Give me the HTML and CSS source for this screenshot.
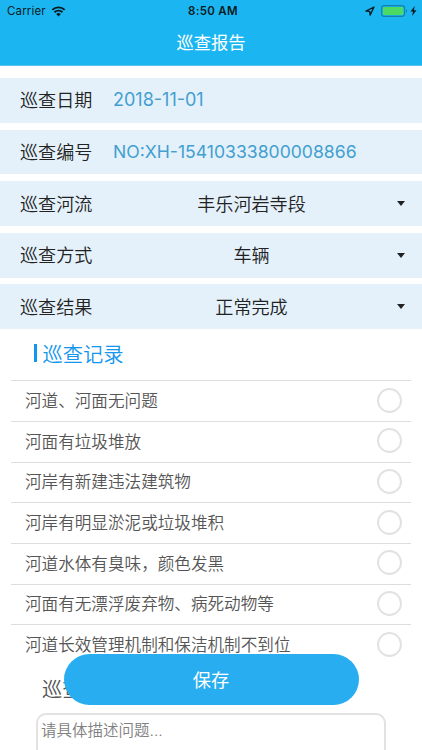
FILE: index.html
```html
<!DOCTYPE html>
<html lang="zh-CN">
<head>
  <meta charset="utf-8">
  <meta name="viewport" content="width=device-width, initial-scale=1">
  <title>巡查报告</title>
  <link rel="stylesheet" href="styles.css">
</head>
<body>
  <header class="header">
    <div class="status-bar">
      <div class="status-left">
        <span class="carrier">Carrier</span>
        <svg class="wifi" width="15" height="11" viewBox="0 0 14 11">
          <path d="M0.8 3.9a8.8 8.8 0 0 1 12.4 0M3 6.3a5.7 5.7 0 0 1 8 0" fill="none" stroke="#0a1a22" stroke-width="1.9"/>
          <path d="M4.7 8.1a3.3 3.3 0 0 1 4.6 0L7 10.5z" fill="#0a1a22"/>
        </svg>
      </div>
      <span class="time">8:50 AM</span>
      <div class="status-right">
        <svg width="10" height="10" viewBox="0 0 10 10">
          <path d="M0.9 5.1L9 1 5.1 9.1 4.7 5.3z" fill="none" stroke="#0a1a22" stroke-width="1.3" stroke-linejoin="round"/>
        </svg>
        <svg class="battery" width="27" height="12" viewBox="0 0 27 12">
          <rect x="0.6" y="0.6" width="23" height="10.8" rx="2.6" fill="none" stroke="#1380ae" stroke-width="1.1"/>
          <rect x="1.9" y="1.9" width="20.4" height="8.2" rx="1.4" fill="#4cd964"/>
          <path d="M25 4.2a2 2 0 0 1 0 3.6z" fill="#1380ae"/>
        </svg>
        <svg class="bolt" width="7" height="10" viewBox="0 0 6 10">
          <path d="M4.2 0L0 5.6h2.5L1.6 10 6 4.2H3.4z" fill="#0a1a22"/>
        </svg>
      </div>
    </div>
    <h1 class="title">巡查报告</h1>
  </header>

  <main>
    <section class="info">
      <div class="info-row">
        <span class="label">巡查日期</span>
        <span class="value date">2018-11-01</span>
      </div>
      <div class="info-row">
        <span class="label">巡查编号</span>
        <span class="value number">NO:XH-15410333800008866</span>
      </div>
      <div class="info-row">
        <span class="label">巡查河流</span>
        <span class="choice">丰乐河岩寺段</span>
        <span class="arrow"></span>
      </div>
      <div class="info-row">
        <span class="label">巡查方式</span>
        <span class="choice">车辆</span>
        <span class="arrow"></span>
      </div>
      <div class="info-row">
        <span class="label">巡查结果</span>
        <span class="choice">正常完成</span>
        <span class="arrow"></span>
      </div>
    </section>

    <h2 class="section-title">巡查记录</h2>
    <ul class="records">
      <li><span>河道、河面无问题</span><i class="radio"></i></li>
      <li><span>河面有垃圾堆放</span><i class="radio"></i></li>
      <li><span>河岸有新建违法建筑物</span><i class="radio"></i></li>
      <li><span>河岸有明显淤泥或垃圾堆积</span><i class="radio"></i></li>
      <li><span>河道水体有臭味，颜色发黑</span><i class="radio"></i></li>
      <li><span>河面有无漂浮废弃物、病死动物等</span><i class="radio"></i></li>
      <li><span>河道长效管理机制和保洁机制不到位</span><i class="radio"></i></li>
    </ul>

    <h2 class="detail-title">巡查</h2>
    <div class="detail-box">请具体描述问题...</div>
  </main>

  <button type="button" class="save">保存</button>
</body>
</html>
```

FILE: styles.css
```css
* {
  box-sizing: border-box;
}
body {
  display: flex;
  flex-direction: column;
  margin: 0;
  height: 750px;
  overflow: hidden;
  background: #fff;
  color: #222;
  font-family: Inter, "Noto Sans CJK SC", sans-serif;
  font-weight: 350;
}
.header {
  flex: none;
  height: 66px;
  background: #1bb6f1;
  border-bottom: 1px solid #5cc0ea;
}
.status-bar {
  display: grid;
  grid-template-columns: 1fr auto 1fr;
  align-items: center;
  height: 22px;
  padding: 0 5px 0 7px;
  color: #0a1a22;
  font-size: 11.5px;
  font-weight: 400;
}
.status-left,
.status-right {
  display: flex;
  align-items: center;
}
.carrier {
  letter-spacing: 0.15px;
}
.wifi {
  margin-left: 5px;
}
.time {
  font-weight: 600;
  letter-spacing: 0.3px;
  padding-left: 2px;
}
.status-right {
  justify-content: flex-end;
}
.battery {
  margin-left: 6px;
}
.bolt {
  margin-left: 2px;
}
.title {
  margin: 0;
  height: 43px;
  line-height: 42px;
  color: #fff;
  font-size: 17.3px;
  font-weight: 400;
  text-align: center;
}
main {
  flex: 1;
  display: flex;
  flex-direction: column;
  min-height: 0;
}
.info {
  display: flex;
  flex-direction: column;
  gap: 6.7px;
  padding-top: 12px;
}
.info-row {
  display: flex;
  align-items: center;
  height: 44.9px;
  padding: 0 17px 2px 20px;
  background: #e4f1fa;
  font-size: 18.1px;
}
.label {
  width: 93px;
}
.value {
  padding-top: 1px;
  color: #429fd0;
  font-weight: 400;
}
.date {
  font-size: 18px;
}
.number {
  font-size: 17.6px;
}
.choice {
  flex: 1;
  padding-right: 7px;
  text-align: center;
}
.arrow {
  margin-top: 2px;
  border: 4.5px solid transparent;
  border-top: 5px solid #222;
  border-bottom: 0;
}
.section-title {
  display: flex;
  align-items: center;
  height: 51px;
  margin: 0;
  padding: 0 0 3px 34px;
  color: #1296ee;
  font-size: 20.3px;
  font-weight: 350;
}
.section-title::before {
  content: "";
  width: 2.5px;
  height: 18px;
  margin-right: 6px;
  background: #1296ee;
}
.records {
  margin: 0 11px;
  padding: 0;
  list-style: none;
  color: #555;
  font-size: 16.6px;
}
.records li {
  display: flex;
  align-items: center;
  justify-content: space-between;
  height: 40.7px;
  padding: 0 9px 2px 14px;
  border-top: 1px solid #ddd;
}
.radio {
  width: 25px;
  height: 25px;
  border: 2px solid #e2e2e2;
  border-radius: 50%;
}
.detail-title {
  height: 48px;
  line-height: 49px;
  margin: 0 0 0 42px;
  color: #555;
  font-size: 20.3px;
  font-weight: 350;
}
.detail-box {
  flex: 1;
  margin: 0 36px;
  padding: 4px 3px 0;
  border: 2px solid #e2e2e2;
  border-bottom: 0;
  border-radius: 10px 10px 0 0;
  color: #808080;
  font-size: 15.5px;
  line-height: 23px;
}
.save {
  position: fixed;
  left: 63.5px;
  bottom: 45px;
  width: 295px;
  height: 51px;
  padding: 0 0 2px;
  border: 0;
  border-radius: 26px;
  background: #29adf1;
  color: #fff;
  font-family: inherit;
  font-size: 18.3px;
}
```
